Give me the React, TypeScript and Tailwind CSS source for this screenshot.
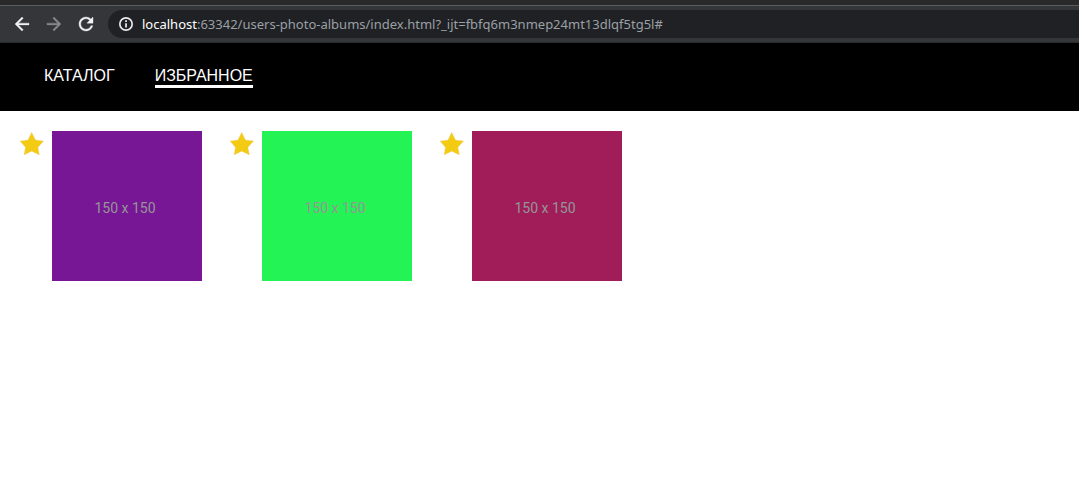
const BACK = 'M20 11H7.83l5.59-5.59L12 4l-8 8 8 8 1.41-1.41L7.83 13H20v-2z';
const FORWARD = 'M12 4l-1.41 1.41L16.17 11H4v2h12.17l-5.58 5.59L12 20l8-8z';
const RELOAD =
  'M17.65 6.35A7.958 7.958 0 0 0 12 4c-4.42 0-7.99 3.58-7.99 8s3.57 8 7.99 8c3.73 0 6.84-2.55 7.73-6h-2.08A5.99 5.99 0 0 1 12 18c-3.31 0-6-2.69-6-6s2.69-6 6-6c1.66 0 3.14.69 4.22 1.78L13 11h7V4l-2.35 2.35z';

const photos = [
  { id: 1, color: 'bg-[#771796]' },
  { id: 2, color: 'bg-[#24f355]' },
  { id: 3, color: 'bg-[#a01d5a]' },
];

function ToolButton({ label, path, color }: { label: string; path: string; color: string }) {
  return (
    <button type="button" aria-label={label} className={color}>
      <svg viewBox="4 4 16 16" className="block size-3.5" fill="currentColor" stroke="currentColor" strokeWidth="0.4" overflow="visible">
        <path d={path} />
      </svg>
    </button>
  );
}

function BrowserBar() {
  return (
    <div className="border-t-5 border-[#292929]">
      <div className="flex items-center border-y border-t-[#5b5c5f] border-b-[#28292b] bg-[#35363a] py-1 pl-[15px]">
        <div className="flex gap-[18px]">
          <ToolButton label="Back" path={BACK} color="text-[#f1f3f4]" />
          <ToolButton label="Forward" path={FORWARD} color="text-[#87888b]" />
          <ToolButton label="Reload" path={RELOAD} color="text-[#f1f3f4]" />
        </div>
        <div className="ml-[15px] flex h-7 min-w-0 flex-1 items-center gap-[9px] rounded-l-full bg-[#202124] pl-[11px]">
          <svg viewBox="2 2 20 20" className="size-3.5 shrink-0" fill="#e8eaed" aria-hidden="true">
            <path d="M12 2a10 10 0 1 0 0 20 10 10 0 0 0 0-20zm0 17.6a7.6 7.6 0 1 1 0-15.2 7.6 7.6 0 0 1 0 15.2zM10.8 10.8h2.5v6.2h-2.5zM10.8 6.8h2.5v2.5h-2.5z" />
          </svg>
          <p className="truncate font-['Noto_Sans','Open_Sans',sans-serif] text-[13px] leading-5 text-[#9aa0a6]">
            <span className="text-white">localhost</span>
            :63342/users-photo-albums/index.html?_ijt=fbfq6m3nmep24mt13dlqf5tg5l#
          </p>
        </div>
      </div>
    </div>
  );
}

export default function App() {
  return (
    <div className="min-h-screen bg-white font-['Liberation_Sans',Arial,sans-serif]">
      <BrowserBar />
      <header className="bg-black px-11 pt-6 pb-[23px]">
        <nav className="flex gap-10 text-base leading-[18px] text-white">
          <a href="#catalog" className="border-b-3 border-transparent">КАТАЛОГ</a>
          <a href="#favorites" aria-current="page" className="border-b-3 border-white">ИЗБРАННОЕ</a>
        </nav>
      </header>
      <main className="flex flex-wrap gap-7 p-5">
        {photos.map((photo) => (
          <div key={photo.id} className="flex items-start gap-2">
            <button type="button" aria-label="Remove from favorites">
              <svg viewBox="0 0 24 24" className="block size-6">
                <path
                  d="M11.7 1.2l3.8 7.8 8.2 1-5.7 6.2 1.4 7.7-7.7-3.6-7.7 3.6 1.4-7.7L-.1 10l8-1z"
                  fill="#f3cb12"
                  stroke="#efcfa8"
                  strokeWidth="0.3"
                />
              </svg>
            </button>
            <div className={`flex size-[150px] items-center justify-center pt-1 pr-1 font-[Roboto,sans-serif] text-sm text-[#969696] ${photo.color}`}>
              150 x 150
            </div>
          </div>
        ))}
      </main>
    </div>
  );
}
